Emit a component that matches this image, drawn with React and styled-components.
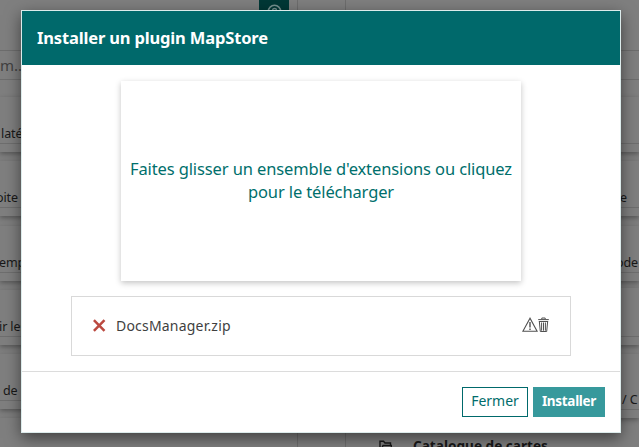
import React from "react";
import styled, { createGlobalStyle } from "styled-components";

const Global = createGlobalStyle`
  * { box-sizing: border-box; }
  html, body { margin: 0; overflow: hidden; }
  body { font-family: "Noto Sans", "Open Sans", sans-serif; }
`;

const Screen = styled.div`
  position: relative;
  width: 639px;
  height: 447px;
  overflow: hidden;
  background: #7f7f7f;
`;

const Workspace = styled.div`
  display: grid;
  grid-template-columns: 290px 62px 1fr;
  height: 447px;
`;

const Column = styled.div`
  display: flex;
  flex-direction: column;
  height: 447px;
  overflow: hidden;
`;

const Filter = styled.div`
  height: 30px;
  flex: none;
  margin: 50px 0 17px;
  border: 1px solid #6d6d6d;
  border-width: 1px 0;
  font-size: 15px;
  line-height: 28px;
  color: #414141;
  white-space: pre;
`;

const Card = styled.div`
  flex: none;
  display: flex;
  flex-direction: column;
  justify-content: flex-end;
  height: ${(p) => p.$height || 55}px;
  margin-bottom: ${(p) => (p.$gap === undefined ? 9.3 : p.$gap)}px;
  padding-bottom: 8px;
  background: #7f7f7f;
  box-shadow: 0 2px 5px rgba(0, 0, 0, 0.32);
`;

const CardLabel = styled.div`
  height: 24px;
  text-indent: ${(p) => p.$start || 0}px;
  border-bottom: 1px solid #6e6e6e;
  font-size: 12.5px;
  line-height: 27px;
  letter-spacing: -0.1px;
  color: #181818;
  white-space: pre;
`;

const CatalogueRow = styled.div`
  display: flex;
  gap: 21px;
  flex: none;
  height: 30px;
  padding: 9px 0 0 27px;
  font-size: 13.6px;
  font-weight: 700;
  line-height: 20px;
  color: #181818;
  white-space: nowrap;
  svg { margin-top: 4px; }
`;

const Rail = styled.div`
  height: 447px;
  margin: 0 6px 0 7px;
  border: 1px solid #6d6d6d;
  border-width: 0 1px;
`;

const HelpButton = styled.div`
  position: absolute;
  left: 259px;
  top: 0;
  width: 30px;
  height: 16px;
  background: #003836;
  svg { display: block; margin: 4px auto 0; }
`;

const Modal = styled.section`
  position: absolute;
  left: 21px;
  top: 10px;
  width: 600px;
  height: 423px;
  display: flex;
  flex-direction: column;
  background: #fff;
  border: 1px solid #dcebeb;
  box-shadow: 0 5px 15px rgba(0, 0, 0, 0.5);
`;

const Header = styled.header`
  flex: none;
  height: 54px;
  padding: 0 15px;
  background: #00696b;
  color: #fff;
  font-size: 16.5px;
  font-weight: 700;
  line-height: 54px;
`;

const Title = styled.span`
  display: inline-block;
  letter-spacing: -0.16px;
  white-space: nowrap;
`;

const Body = styled.div`
  flex: 1;
  display: flex;
  flex-direction: column;
  align-items: center;
  padding-top: 16px;
`;

const Dropzone = styled.div`
  flex: none;
  display: flex;
  flex-direction: column;
  align-items: center;
  width: 400px;
  height: 200px;
  padding-top: 76px;
  box-shadow: 0 2px 6px rgba(0, 0, 0, 0.24);
  color: #006f6c;
  font-size: 16.5px;
  line-height: 23px;
  letter-spacing: -0.12px;
  white-space: nowrap;
`;

const FileRow = styled.div`
  flex: none;
  display: flex;
  align-items: center;
  width: 500px;
  height: 60px;
  margin-top: 15px;
  padding: 0 21px 2px;
  border: 1px solid #d9d9d9;
`;

const FileName = styled.span`
  flex: 1;
  margin-left: 10px;
  color: #3f3f3f;
  font-size: 14px;
  letter-spacing: 0.2px;
`;

const Footer = styled.footer`
  flex: none;
  display: flex;
  justify-content: flex-end;
  gap: 5px;
  height: 61px;
  padding: 15px 15px 0;
  border-top: 1px solid #dcdcdc;
`;

const Button = styled.button`
  width: ${(p) => p.$width}px;
  height: 30px;
  padding: 0 0 3px;
  border: 1px solid ${(p) => (p.$primary ? "#37999c" : "#00696b")};
  background: ${(p) => (p.$primary ? "#37999c" : "#fff")};
  color: ${(p) => (p.$primary ? "#fff" : "#006c6b")};
  font: ${(p) => (p.$primary ? "700 13.5px" : "400 14px")} "Noto Sans", sans-serif;
  letter-spacing: ${(p) => (p.$primary ? -0.3 : 0)}px;
`;

const CrossIcon = () => (
  <svg width="13" height="13" viewBox="0 0 13 13" fill="none" stroke="#bb4940" strokeWidth="2.5">
    <path d="M.9 1.2 11.5 11.8M11.5 1.2.9 11.8" />
  </svg>
);

const WarningIcon = () => (
  <svg width="16" height="16" viewBox="0 0 16 16" fill="none" stroke="#505050">
    <path d="M8 1.2.9 14.3h14.2Z" strokeWidth="1.1" />
    <path d="M8 5v5.4M8 11.6v1.3" strokeWidth="1.4" />
  </svg>
);

const TrashIcon = () => (
  <svg width="11" height="16" viewBox="0 0 11 16" fill="none" stroke="#505050">
    <path d="M3.8 2V1h3.4v1M.2 2.6h10.6" />
    <path d="M.8 4.5h9.4M1.4 5l.9 9.5h6.4l.9-9.5" />
    <path d="M3.6 5.5v8.2M5.5 5.5v8.2M7.4 5.5v8.2" strokeWidth="1" />
  </svg>
);

const HelpIcon = () => (
  <svg width="15" height="15" viewBox="0 0 15 15" fill="none" stroke="#75908f">
    <circle cx="7.5" cy="7.5" r="6.2" strokeWidth="1.5" />
    <path d="M5.5 6c.4-2 4-2 4 0 0 1.4-2 1.2-2 3" strokeWidth="1.3" />
  </svg>
);

const FolderIcon = () => (
  <svg width="13" height="13" viewBox="0 0 13 13" fill="none" stroke="#181818" strokeWidth="1.4">
    <path d="M1 11V1.2h3.5L6 3h5.5v2M1.5 11.5 4 5.5h8.8l-2.3 6Z" />
  </svg>
);

export default function App() {
  return (
    <>
      <Global />
      <Screen>
        <Workspace>
          <Column>
            <Filter>m...</Filter>
            <Card><CardLabel $start={1}>latéral</CardLabel></Card>
            <Card><CardLabel $start={-4}>oite</CardLabel></Card>
            <Card><CardLabel $start={-1}>emplois</CardLabel></Card>
            <Card><CardLabel $start={-1}>ir les</CardLabel></Card>
            <Card><CardLabel $start={3}>de</CardLabel></Card>
            <Card />
          </Column>
          <Rail />
          <Column>
            <Filter />
            <Card><CardLabel /></Card>
            <Card><CardLabel $start={268}>e</CardLabel></Card>
            <Card $gap={7}><CardLabel $start={264}>ode</CardLabel></Card>
            <Card $height={57}><CardLabel /></Card>
            <Card $height={64}><CardLabel $start={270}>/ C</CardLabel></Card>
            <CatalogueRow><FolderIcon />Catalogue de cartes</CatalogueRow>
          </Column>
        </Workspace>
        <HelpButton><HelpIcon /></HelpButton>
        <Modal role="dialog">
          <Header><Title>Installer un plugin MapStore</Title></Header>
          <Body>
            <Dropzone>
              <div>Faites glisser un ensemble d'extensions ou cliquez</div>
              <div>pour le télécharger</div>
            </Dropzone>
            <FileRow>
              <CrossIcon />
              <FileName>DocsManager.zip</FileName>
              <WarningIcon />
              <TrashIcon />
            </FileRow>
          </Body>
          <Footer>
            <Button $width={66}>Fermer</Button>
            <Button $width={72} $primary>Installer</Button>
          </Footer>
        </Modal>
      </Screen>
    </>
  );
}
